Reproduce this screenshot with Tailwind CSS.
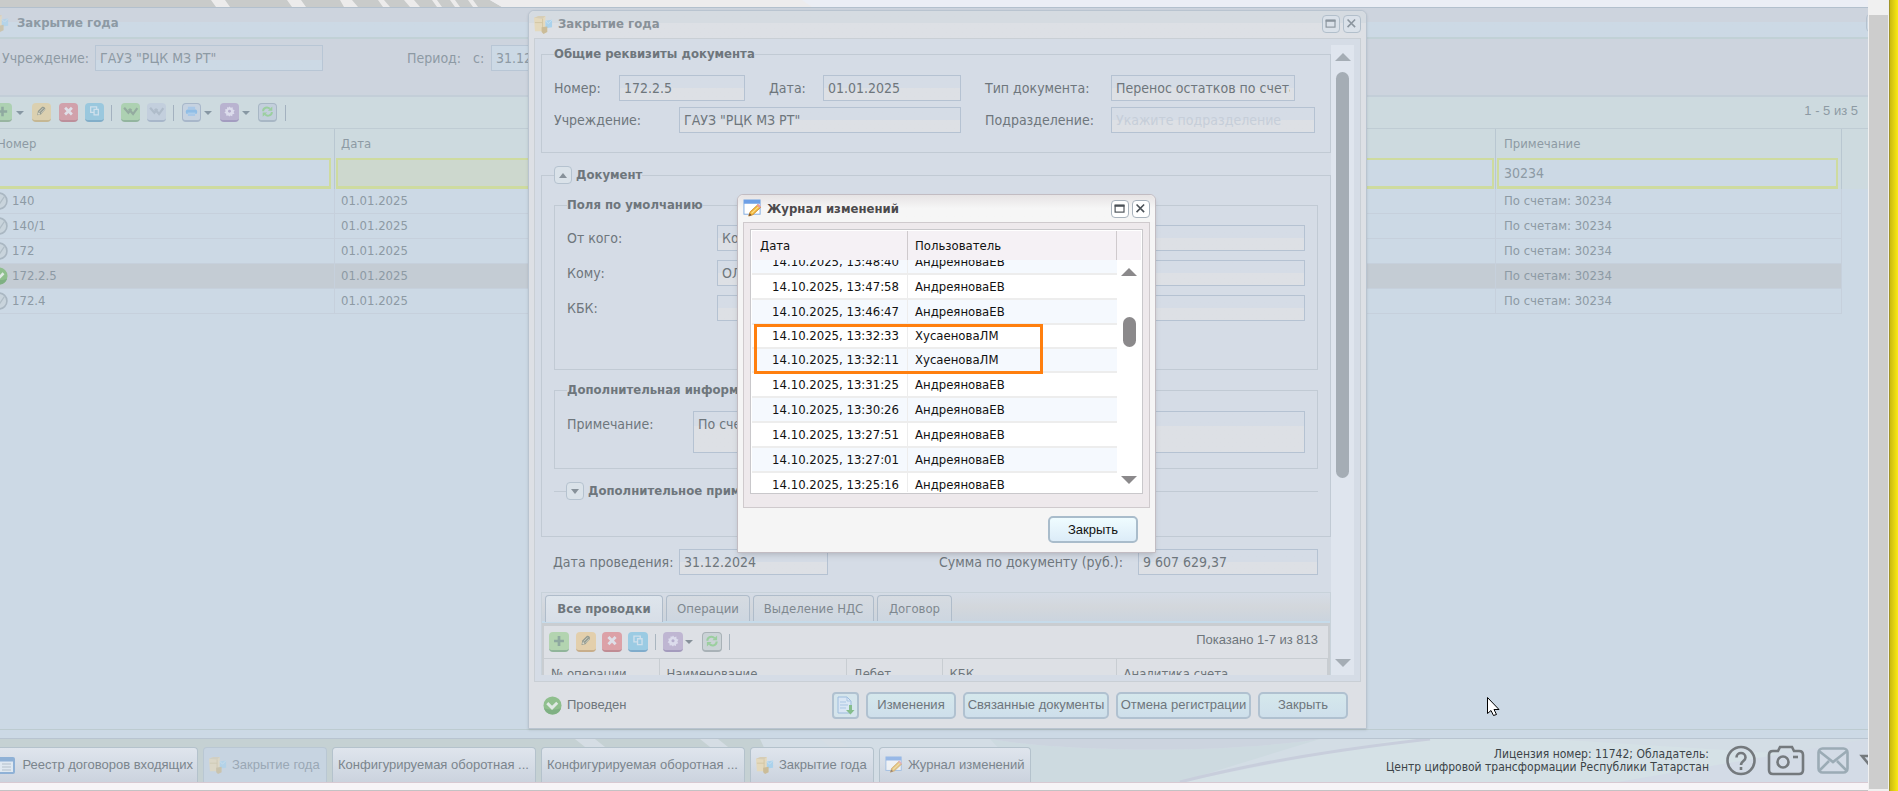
<!DOCTYPE html>
<html lang="ru">
<head>
<meta charset="utf-8">
<title>Закрытие года</title>
<script src="https://cdn.jsdelivr.net/npm/@tailwindcss/browser@4"></script>
</head>
<body class="h-screen overflow-hidden bg-[#f5f3f5] font-['DejaVu_Sans_Condensed','DejaVu_Sans',sans-serif] text-[14px]">
<svg class="hidden" aria-hidden="true">
  <symbol id="plus" viewBox="0 0 20 20"><path d="M8.500 4.500h3v4h4v3h-4v4h-3v-4h-4v-3h4z" fill="#8fa9a0"/></symbol>
  <symbol id="pencil" viewBox="0 0 20 20"><path d="M5 14.500l.8-5 5-5c2-1 4.500 1.500 3.500 3.500l-5 5.500z" fill="#949b91"/><path d="M7.500 10.500l4.500-4.500M9.500 12l4.500-4.500" stroke="#d9d6c6" stroke-width="1"/><circle cx="7" cy="12.500" r="1.200" fill="#dcd8c8"/></symbol>
  <symbol id="cross" viewBox="0 0 20 20"><path d="M6 5.500l8 8M14 5.500l-8 8" stroke="#dfdfe8" stroke-width="3.200"/></symbol>
  <symbol id="copy" viewBox="0 0 20 20"><path d="M9 11H5.500V4.500h7V7M9.500 7.500h5v6.500h-5z" fill="none" stroke="#cfe0ec" stroke-width="1.500"/></symbol>
  <symbol id="check2" viewBox="0 0 20 20"><path d="M2.500 5.500l5 6 3.500-4.500M8 7l5 6 5-7" fill="none" stroke="currentColor" stroke-width="2.600"/></symbol>
  <symbol id="print" viewBox="0 0 20 20"><path d="M5.500 3.500h9v3h-9zM5.500 12h9v3h-9z" fill="#a9c8e8"/><rect x="3" y="7" width="14" height="5.500" rx="2" fill="#8fbde6"/><path d="M5 11.500h10" stroke="#c6daee"/></symbol>
  <symbol id="gear" viewBox="0 0 20 20"><path d="M10 4l1.500 1.700 2.200-.6.200 2.400 2.200 1-1.300 2 1 2-2.300.8-.3 2.300-2.200-.8-1 1.200-1.500-1.400-2.300.4-.1-2.300L4 11.500l1.500-1.900L4.700 7.500 7 7l.4-2.200L9 5.200z" fill="#dcdcec"/><circle cx="10" cy="9.700" r="1.700" fill="#b5aecd"/></symbol>
  <symbol id="refresh" viewBox="0 0 20 20"><path d="M4.500 9c0-4.500 5.500-6 8.500-3M15.500 10c0 4.500-5.500 6-8.500 3" fill="none" stroke="#9bcf9f" stroke-width="2.400"/><path d="M16 3v5.500h-5.500zM4 16v-5.500h5.500z" fill="#9bcf9f"/></symbol>
  <symbol id="box" viewBox="0 0 20 20"><path d="M0 3l5-2h7v14l-4 2H1z" fill="#e4d9bd"/><path d="M0 3l5-2h7l-3 3z" fill="#d6cdb6"/><path d="M9 4v12M1 8h8" stroke="#d2c5a3" fill="none"/><path d="M12 6l7-1v8l-7 1z" fill="#abd2ec"/><path d="M12 6l3 3 4-4" fill="none" stroke="#c9e1f1"/><path d="M8 13l6-1v6l-4 2-2-2z" fill="#cbbc98"/></symbol>
  <symbol id="journal" viewBox="0 0 20 20"><rect x="1" y="1" width="17" height="15" fill="#fff" stroke="#7eaae0"/><path d="M1 1h17v4H1z" fill="#6d9fe6"/><path d="M6 18l1.500-4.500 8-7.500 3 3-8 7.500z" fill="#f2b63c" stroke="#c98a2c" stroke-width=".8"/><path d="M9 15l7.500-7" stroke="#fbe08a" stroke-width="1.200"/><path d="M14.500 6.500l3 3 1.500-1.500-3-3z" fill="#e89aa0"/><path d="M6 18l1-3 2 2z" fill="#6b4a34"/></symbol>
  <symbol id="max" viewBox="0 0 18 18"><rect x="3.500" y="4.500" width="10" height="8" fill="none" stroke="currentColor" stroke-width="1.300"/><path d="M3 5.500h11" stroke="currentColor" stroke-width="2"/></symbol>
  <symbol id="close" viewBox="0 0 18 18"><path d="M4 4l8.500 8.500M12.500 4L4 12.500" stroke="currentColor" stroke-width="1.800"/></symbol>
  <symbol id="off" viewBox="0 0 20 20"><circle cx="10" cy="10" r="8.800" fill="#c9d4dc" stroke="#aab7c2" stroke-width="1.800"/><path d="M6 10l4 4 6-9" fill="none" stroke="#b0bdc6" stroke-width="1.500"/></symbol>
  <symbol id="on" viewBox="0 0 20 20"><circle cx="10" cy="10" r="9.500" fill="#8fbf8d"/><path d="M1 13a9.500 9.500 0 0 0 18 0c-5 2-13 2-18 0z" fill="#7fb083"/><path d="M4.500 7.500l5 5L15 7" fill="none" stroke="#dfe9e4" stroke-width="3"/></symbol>
</svg>

<div class="flex h-full">
<div class="flex h-full min-w-0 flex-1 flex-col">
<main class="relative min-h-0 flex-1 overflow-hidden bg-[#ccd9e5] text-[#8d9aa4]">
  <svg class="block h-[7px] w-full bg-[#ebeef5]" viewBox="0 0 1868 7" preserveAspectRatio="none"><path d="M0 0h490l12 7H0z" fill="#c9cbca"/><path d="M211 0h14l5 7h-14zM287 0h14l5 7h-14zM340 0h12l6 7h-14zM378 0h6l6 7h-7zM404 0h10l6 7h-10zM432 0h5l5 7h-5zM450 0h5l5 7h-5zM468 0h5l5 7h-5z" fill="#ecebeb"/><path d="M490 0h312l10 7H502z" fill="#edeced"/></svg>
  <section class="-ml-3 flex h-full flex-col border-t border-[#b3c0cd]">
    <header class="flex h-[31px] shrink-0 items-center gap-2 border-b-2 border-[#c1d1d6] bg-linear-to-b from-[#cdd4de] from-50% to-[#ccd9e5] to-50% pl-[3px]">
      <svg class="size-[18px] opacity-70"><use href="#box"/></svg>
      <h1 class="flex-1 text-[13px] font-bold">Закрытие года</h1>
      <button class="-mr-4 size-[18px] rounded border border-[#b5c2cf]" aria-label="Развернуть"></button>
    </header>
    <div class="flex h-[58px] shrink-0 items-start border-b-2 border-[#c3ced8] bg-[#cdd4de] pt-[6px] pl-[14px]">
      <label for="org" class="w-[93px] leading-[26px]">Учреждение:</label>
      <input id="org" class="h-[26px] w-[228px] border border-[#b8c6d5] bg-linear-to-b from-[#cdd4de] from-60% to-[#ccd9e5] to-60% px-1" value='ГАУЗ "РЦК МЗ РТ"'>
      <span class="ml-[84px] w-[66px] leading-[26px]">Период:</span>
      <label for="from" class="w-[18px] leading-[26px]">с:</label>
      <input id="from" class="h-[26px] w-[110px] border border-[#b8c6d5] bg-[#ccd9e5] px-1" value="31.12.2024">
    </div>
    <div class="flex h-8 shrink-0 items-center border-b border-[#bfccd4] bg-[#cddadf] pl-[5px] font-['Liberation_Sans',sans-serif] text-[13px]">
      <button aria-label="Добавить" class="size-[19px] rounded-[4px] border-b-2 border-[#98b5a1] bg-[#add1b2]"><svg class="size-full"><use href="#plus"/></svg></button>
      <span class="ml-[4px] border-x-4 border-t-4 border-x-transparent border-t-[#8797a3]"></span>
      <button aria-label="Изменить" class="ml-2 size-[19px] rounded-[4px] border-b-2 border-[#c5b793] bg-[#dbd0b0]"><svg class="size-full"><use href="#pencil"/></svg></button>
      <button aria-label="Удалить" class="ml-2 size-[19px] rounded-[4px] border-b-2 border-[#bc8f9b] bg-[#d1a1ab]"><svg class="size-full"><use href="#cross"/></svg></button>
      <button aria-label="Копировать" class="ml-[7px] size-[19px] rounded-[4px] border-b-2 border-[#82aec9] bg-[#9ac8de]"><svg class="size-full"><use href="#copy"/></svg></button>
      <span class="mx-[7px] h-4 w-px bg-[#a3b1bf]"></span>
      <button aria-label="Провести" class="ml-[2px] size-[19px] rounded-[4px] border-b-2 border-[#93b59f] bg-[#add1b2] text-[#94aba0]"><svg class="size-full"><use href="#check2"/></svg></button>
      <button aria-label="Отменить проведение" class="ml-[7px] size-[19px] rounded-[4px] border-b-2 border-[#a8b7ca] bg-[#c3cfdd] text-[#afbcca]"><svg class="size-full"><use href="#check2"/></svg></button>
      <span class="mx-[7px] h-4 w-px bg-[#a3b1bf]"></span>
      <button aria-label="Печать" class="ml-px size-[19px] rounded-[4px] border border-b-2 border-[#a8b7ca] bg-[#c6d2e0]"><svg class="size-full"><use href="#print"/></svg></button>
      <span class="ml-[3px] border-x-4 border-t-4 border-x-transparent border-t-[#8797a3]"></span>
      <button aria-label="Сервис" class="ml-2 size-[19px] rounded-[4px] border-b-2 border-[#a39cc0] bg-[#b9b3d0]"><svg class="size-full"><use href="#gear"/></svg></button>
      <span class="ml-[3px] border-x-4 border-t-4 border-x-transparent border-t-[#8797a3]"></span>
      <button aria-label="Обновить" class="ml-2 size-[19px] rounded-[4px] border border-b-2 border-[#a8b7c5] bg-[#c3cfdc]"><svg class="size-full"><use href="#refresh"/></svg></button>
      <span class="mx-[8px] h-4 w-px bg-[#a3b1bf]"></span>
      <span class="ml-auto pr-[10px] pb-[3px]">1 - 5 из 5</span>
    </div>
    <table class="w-full table-fixed border-separate border-spacing-0 text-left text-[13px]">
      <colgroup><col class="w-[347px]"><col class="w-[290px]"><col><col class="w-[346px]"><col class="w-[26px]"></colgroup>
      <thead class="bg-[#cddadf]">
        <tr class="h-[29px]"><th class="border-r border-[#b9c7d1] pl-[9px] font-normal">Номер</th><th class="border-r border-[#b9c7d1] pl-[6px] font-normal">Дата</th><th class="border-r border-[#b9c7d1]"></th><th class="border-r border-[#b9c7d1] pl-[8px] font-normal">Примечание</th><th></th></tr>
        <tr class="h-[31px]">
          <td class="border-r border-[#b9c7d1] pr-[3px]"><input aria-label="Фильтр по номеру" class="block h-[31px] w-full border-2 border-b-3 border-[#cedb9f] bg-[#ccd9e5] px-2"></td>
          <td class="border-r border-[#b9c7d1] px-px"><input aria-label="Фильтр по дате" class="block h-[31px] w-full border-2 border-b-3 border-[#cedb9f] bg-[#cdd8ce] px-2"></td>
          <td class="border-r border-[#b9c7d1] px-px"><input aria-label="Фильтр по типу" class="block h-[31px] w-full border-2 border-b-3 border-[#cedb9f] bg-[#ccd9e5] px-2"></td>
          <td class="border-r border-[#b9c7d1] pr-[3px] pl-px"><input aria-label="Фильтр по примечанию" class="block h-[31px] w-full border-2 border-b-3 border-[#cedb9f] bg-[#ccd9e5] px-[5px] text-[14px]" value="30234"></td><td></td>
        </tr>
      </thead>
      <tbody class="[&_td]:h-[25px] [&_td]:border-r [&_td]:border-b [&_td]:border-[#c6d0dc] [&_td]:p-0 [&_td]:pl-[6px] [&_td:nth-child(4)]:pl-[8px] [&_td:last-child]:border-0">
        <tr><td><div class="flex items-center gap-1"><svg class="-ml-1 size-[18px]"><use href="#off"/></svg>140</div></td><td>01.01.2025</td><td></td><td>По счетам: 30234</td><td></td></tr>
        <tr><td><div class="flex items-center gap-1"><svg class="-ml-1 size-[18px]"><use href="#off"/></svg>140/1</div></td><td>01.01.2025</td><td></td><td>По счетам: 30234</td><td></td></tr>
        <tr><td><div class="flex items-center gap-1"><svg class="-ml-1 size-[18px]"><use href="#off"/></svg>172</div></td><td>01.01.2025</td><td></td><td>По счетам: 30234</td><td></td></tr>
        <tr class="[&_td:not(:last-child)]:bg-[#c4ccd4]"><td><div class="flex items-center gap-1"><svg class="-ml-1 size-[18px]"><use href="#on"/></svg>172.2.5</div></td><td>01.01.2025</td><td></td><td>По счетам: 30234</td><td></td></tr>
        <tr><td><div class="flex items-center gap-1"><svg class="-ml-1 size-[18px]"><use href="#off"/></svg>172.4</div></td><td>01.01.2025</td><td></td><td>По счетам: 30234</td><td></td></tr>
      </tbody>
    </table>
  </section>
  <div class="absolute inset-x-0 bottom-0 h-[10px] border-y border-t-[#bccbd0] border-b-[#b8c4d0]"></div>

  <!-- Document window -->
  <section class="absolute top-[10px] bottom-[10px] left-[528px] flex w-[839px] flex-col rounded-t-[6px] border border-[#b9c4d0] bg-[#dde0e5] px-[5px] text-[#6e767c] shadow-sm">
    <header class="-mx-[5px] flex h-[27px] shrink-0 items-center gap-[5px] rounded-t-[6px] bg-linear-to-b from-[#d5dbe1] from-45% to-[#dde0e5] to-45% px-[5px] pb-px">
      <svg class="size-[19px]"><use href="#box"/></svg>
      <h2 class="flex-1 text-[13px] font-bold text-[#899198]">Закрытие года</h2>
      <button aria-label="Развернуть" class="size-[18px] rounded-[4px] border border-[#b2bfcb] bg-[#dae1e9] text-[#8b959e]"><svg class="size-full"><use href="#max"/></svg></button>
      <button aria-label="Закрыть окно" class="-ml-[2px] size-[18px] rounded-[4px] border border-[#b2bfcb] bg-[#dae1e9] text-[#8b959e]"><svg class="size-full"><use href="#close"/></svg></button>
    </header>
    <div class="flex min-h-0 flex-1 border border-[#c9cfd5] bg-[#d5dce6] p-[6px]">
      <div class="min-w-0 flex-1 overflow-hidden">
        <fieldset class="min-w-0 border border-[#c1cad4] px-3 pt-3 pb-[19px]">
          <legend class="text-[13px] leading-[18px] font-bold">Общие реквизиты документа</legend>
          <div class="flex items-center">
            <label for="num" class="w-[65px]">Номер:</label>
            <input id="num" class="h-[26px] w-[126px] border border-[#b5c2d2] bg-linear-to-b from-[#d5dce6] from-50% to-[#dde0e5] to-50% px-1" value="172.2.5">
            <label for="date" class="ml-6 w-[54px]">Дата:</label>
            <input id="date" class="h-[26px] w-[138px] border border-[#b5c2d2] bg-linear-to-b from-[#d5dce6] from-50% to-[#dde0e5] to-50% px-1" value="01.01.2025">
            <label for="type" class="ml-6 w-[126px]">Тип документа:</label>
            <input id="type" class="h-[26px] w-[184px] border border-[#b5c2d2] bg-linear-to-b from-[#d5dce6] from-50% to-[#dde0e5] to-50% px-1" value="Перенос остатков по счетам">
          </div>
          <div class="mt-[6px] flex items-center">
            <label for="org2" class="w-[125px]">Учреждение:</label>
            <input id="org2" class="h-[26px] w-[282px] border border-[#b5c2d2] bg-linear-to-b from-[#d5dce6] from-50% to-[#dde0e5] to-50% px-1" value='ГАУЗ "РЦК МЗ РТ"'>
            <label for="dep" class="ml-6 w-[126px]">Подразделение:</label>
            <input id="dep" class="h-[26px] w-[204px] border border-[#b5c2d2] bg-linear-to-b from-[#d5dce6] from-50% to-[#dde0e5] to-50% px-1 placeholder:text-[#c6ced9]" placeholder="Укажите подразделение">
          </div>
        </fieldset>
        <fieldset class="mt-[13px] min-w-0 border border-[#c1cad4] px-3 pt-3 pb-[36px]">
          <legend class="flex items-center gap-1 text-[13px] leading-[18px] font-bold"><button aria-label="Свернуть" class="flex size-[18px] items-center justify-center rounded-[4px] border border-[#b5c2cf] bg-[#dae2e9]"><span class="border-x-4 border-b-5 border-x-transparent border-b-[#87919a]"></span></button>Документ</legend>
          <fieldset class="min-w-0 border border-[#c1cad4] px-3 pt-[11px] pb-[48px]">
            <legend class="text-[13px] leading-[18px] font-bold">Поля по умолчанию</legend>
            <div class="flex flex-col gap-[9px]">
              <div class="flex items-center"><label for="who" class="w-[150px]">От кого:</label><input id="who" class="h-[26px] min-w-0 flex-1 border border-[#b5c2d2] bg-linear-to-b from-[#d5dce6] from-50% to-[#dde0e5] to-50% px-1" value="Ко"></div>
              <div class="flex items-center"><label for="whom" class="w-[150px]">Кому:</label><input id="whom" class="h-[26px] min-w-0 flex-1 border border-[#b5c2d2] bg-linear-to-b from-[#d5dce6] from-50% to-[#dde0e5] to-50% px-1" value="ОЛ"></div>
              <div class="flex items-center"><label for="kbk" class="w-[150px]">КБК:</label><input id="kbk" class="h-[26px] min-w-0 flex-1 border border-[#b5c2d2] bg-linear-to-b from-[#d5dce6] from-50% to-[#dde0e5] to-50% px-1"></div>
            </div>
          </fieldset>
          <fieldset class="mt-[11px] min-w-0 border border-[#c1cad4] px-3 pt-3 pb-[15px]">
            <legend class="text-[13px] leading-[18px] font-bold">Дополнительная информация</legend>
            <div class="flex"><label for="note" class="w-[126px] leading-[26px]">Примечание:</label><textarea id="note" class="block h-[42px] min-w-0 flex-1 resize-none border border-[#b5c2d2] bg-linear-to-b from-[#d5dce6] from-35% to-[#dde0e5] to-35% px-1 py-[2px]">По счетам: 30234</textarea></div>
          </fieldset>
          <fieldset class="mt-[13px] min-w-0 border-t border-[#c1cad4] px-3">
            <legend class="flex items-center gap-1 text-[13px] leading-[18px] font-bold"><button aria-label="Развернуть раздел" class="flex size-[18px] items-center justify-center rounded-[4px] border border-[#b5c2cf] bg-[#dae2e9]"><span class="border-x-4 border-t-5 border-x-transparent border-t-[#87919a]"></span></button>Дополнительное примечание</legend>
          </fieldset>
        </fieldset>
        <div class="mt-3 flex items-center pl-3">
          <label for="posted" class="w-[126px] whitespace-nowrap">Дата проведения:</label>
          <input id="posted" class="h-[26px] w-[149px] border border-[#b5c2d2] bg-linear-to-b from-[#d5dce6] from-50% to-[#dde0e5] to-50% px-1" value="31.12.2024">
          <label for="sum" class="ml-[111px] w-[199px] whitespace-nowrap">Сумма по документу (руб.):</label>
          <input id="sum" class="h-[26px] w-[180px] border border-[#b5c2d2] bg-linear-to-b from-[#d5dce6] from-50% to-[#dde0e5] to-50% px-1" value="9 607 629,37">
        </div>
        <div class="mt-[17px] border border-[#c8d2da]">
          <nav class="flex h-[30px] gap-[3px] border-b-2 border-[#c6dbea] bg-linear-to-b from-[#d5dce6] via-[#d3d7dc] via-50% to-[#cbd4de] px-[3px] pt-[2px] text-[13px] text-[#7f888f]">
            <button class="h-[27px] w-[118px] rounded-t border border-b-0 border-[#afbcca] bg-linear-to-b from-[#dee5ec] to-[#d7dee7] font-bold text-[#6e767c]">Все проводки</button>
            <button class="h-[26px] w-[84px] rounded-t border border-b-0 border-[#afbcca] bg-linear-to-b from-[#d6dbe1] to-[#cdd6e0]">Операции</button>
            <button class="h-[26px] w-[121px] rounded-t border border-b-0 border-[#afbcca] bg-linear-to-b from-[#d6dbe1] to-[#cdd6e0]">Выделение НДС</button>
            <button class="h-[26px] w-[75px] rounded-t border border-b-0 border-[#afbcca] bg-linear-to-b from-[#d6dbe1] to-[#cdd6e0]">Договор</button>
          </nav>
          <div class="border-2 border-t-3 border-[#c9cdd1] bg-[#dde0e5]">
            <div class="flex h-[33px] items-center border-b border-[#c8cdd2] pr-[10px] pl-[5px] font-['Liberation_Sans',sans-serif] text-[13px]">
              <button aria-label="Добавить проводку" class="size-5 rounded-[4px] border-b-2 border-[#91b59a] bg-[#b3d4b0]"><svg class="size-full"><use href="#plus"/></svg></button>
              <button aria-label="Изменить проводку" class="ml-[7px] size-5 rounded-[4px] border-b-2 border-[#c8ae8b] bg-[#e3cfac]"><svg class="size-full"><use href="#pencil"/></svg></button>
              <button aria-label="Удалить проводку" class="ml-[6px] size-5 rounded-[4px] border-b-2 border-[#c08c94] bg-[#dca1a7]"><svg class="size-full"><use href="#cross"/></svg></button>
              <button aria-label="Копировать проводку" class="ml-[6px] size-5 rounded-[4px] border-b-2 border-[#80accb] bg-[#9bcbe3]"><svg class="size-full"><use href="#copy"/></svg></button>
              <span class="mx-[7px] h-4 w-px bg-[#a9b5bf]"></span>
              <button aria-label="Сервис проводок" class="size-5 rounded-[4px] border-b-2 border-[#a49bbd] bg-[#bfb6d2]"><svg class="size-full"><use href="#gear"/></svg></button>
              <span class="ml-[2px] border-x-4 border-t-4 border-x-transparent border-t-[#87919a]"></span>
              <button aria-label="Обновить проводки" class="ml-[9px] size-5 rounded-[4px] border border-b-2 border-[#a9b2b7] bg-[#cbd3d7]"><svg class="size-full"><use href="#refresh"/></svg></button>
              <span class="mx-[7px] h-4 w-px bg-[#a9b5bf]"></span>
              <span class="ml-auto pb-1">Показано 1-7 из 813</span>
            </div>
            <table class="w-full table-fixed text-left text-[13px]">
              <colgroup><col class="w-[115px]"><col class="w-[187px]"><col class="w-[96px]"><col class="w-[174px]"><col></colgroup>
              <thead><tr class="h-[29px] [&_th]:border-r [&_th]:border-[#c8cdd2] [&_th]:pl-[7px] [&_th]:font-normal"><th>№ операции</th><th>Наименование</th><th>Дебет</th><th>КБК</th><th>Аналитика счета</th></tr></thead>
            </table>
          </div>
        </div>
      </div>
      <div class="flex w-[23px] shrink-0 flex-col items-center bg-[#dfe5ee] py-2">
        <span class="border-x-8 border-b-8 border-x-transparent border-b-[#a5adb5]"></span>
        <span class="mt-[11px] h-[406px] w-[13px] rounded-full bg-[#a5adb5]"></span>
        <span class="mt-auto border-x-8 border-t-8 border-x-transparent border-t-[#a5adb5]"></span>
      </div>
    </div>
    <footer class="flex h-[46px] shrink-0 items-center gap-[7px] pr-[13px] pl-[9px] font-['Liberation_Sans',sans-serif] text-[13px]">
      <svg class="size-[19px]"><use href="#on"/></svg>
      <span class="-ml-[2px] flex-1">Проведен</span>
      <button aria-label="Выгрузить" class="flex size-[27px] items-center justify-center rounded-[4px] border-2 border-[#b0c1d0] bg-[#d5e5ec]"><svg class="size-[19px]" viewBox="0 0 19 19"><path d="M2 1h9l4 4v12H2z" fill="#d9e6f4" stroke="#9dbcdc"/><path d="M11 1v4h4M4 6h6M4 9h8M4 12h6" stroke="#a9c5e3" fill="none"/><path d="M13 9h3v5h2.500L14.500 18.500 10 14h3z" fill="#85bd8c"/></svg></button>
      <button class="h-[27px] w-[90px] rounded-[5px] border-2 border-[#b0c1d0] bg-linear-to-b from-[#d5e8ec] to-[#cedfeb] whitespace-nowrap">Изменения</button>
      <button class="h-[27px] w-[146px] rounded-[5px] border-2 border-[#b0c1d0] bg-linear-to-b from-[#d5e8ec] to-[#cedfeb] whitespace-nowrap">Связанные документы</button>
      <button class="h-[27px] w-[135px] rounded-[5px] border-2 border-[#b0c1d0] bg-linear-to-b from-[#d5e8ec] to-[#cedfeb] whitespace-nowrap">Отмена регистрации</button>
      <button class="h-[27px] w-[90px] rounded-[5px] border-2 border-[#b0c1d0] bg-linear-to-b from-[#d5e8ec] to-[#cedfeb] whitespace-nowrap">Закрыть</button>
    </footer>
  </section>

  <!-- Change log window -->
  <section class="absolute top-[194px] left-[737px] flex w-[419px] flex-col rounded-t-[6px] border border-[#c2bcc2] bg-[#f5f5f5] px-[5px] text-[#111] shadow-md">
    <header class="-mx-[5px] flex h-[27px] items-center gap-[5px] rounded-t-[6px] bg-linear-to-b from-[#e6e3e4] to-[#f6f6f6] to-50% px-[5px]">
      <svg class="size-[19px]"><use href="#journal"/></svg>
      <h2 class="flex-1 text-[13px] font-bold text-[#4c4a4c]">Журнал изменений</h2>
      <button aria-label="Развернуть журнал" class="size-[18px] rounded-[4px] border border-[#a9b3bd] bg-white text-[#4b5157]"><svg class="size-full"><use href="#max"/></svg></button>
      <button aria-label="Закрыть журнал" class="-ml-[2px] size-[18px] rounded-[4px] border border-[#a9b3bd] bg-white text-[#4b5157]"><svg class="size-full"><use href="#close"/></svg></button>
    </header>
    <div class="border border-[#cfcacd] bg-[#eee9ec] px-[6px] pt-[6px] pb-[13px]">
      <div class="flex h-[265px] flex-col border border-[#c9c8cb] bg-white p-px text-[13px]">
        <div class="z-10 flex h-[29px] shrink-0 items-center bg-[#f5f1f5]">
          <span class="flex h-full w-[156px] items-center border-r border-[#cfcacd] pl-2">Дата</span>
          <span class="flex h-full flex-1 items-center border-r border-[#cfcacd] pl-[7px]">Пользователь</span>
          <span class="w-[24px]"></span>
        </div>
        <div class="flex min-h-0 flex-1">
          <div class="relative flex min-w-0 flex-1 flex-col justify-end overflow-hidden">
            <table class="-mb-[6px] w-full table-fixed border-separate border-spacing-0 [&_td]:border-b-2 [&_td]:border-[#ededed] [&_td]:p-0 [&_td]:pl-[7px] [&_td:first-child]:border-r [&_td:first-child]:pr-2 [&_td:first-child]:text-right [&_tr]:h-[25px] [&_tr:nth-child(4)]:h-[24px] [&_tr:nth-child(5)]:h-[24px] [&_tr:nth-child(odd)]:bg-[#f5f9fe]" aria-label="Журнал изменений">
              <colgroup><col class="w-[156px]"><col></colgroup>
              <tbody>
                <tr><td>14.10.2025, 13:48:40</td><td>АндреяноваЕВ</td></tr>
                <tr><td>14.10.2025, 13:47:58</td><td>АндреяноваЕВ</td></tr>
                <tr><td>14.10.2025, 13:46:47</td><td>АндреяноваЕВ</td></tr>
                <tr><td>14.10.2025, 13:32:33</td><td>ХусаеноваЛМ</td></tr>
                <tr><td>14.10.2025, 13:32:11</td><td>ХусаеноваЛМ</td></tr>
                <tr><td>14.10.2025, 13:31:25</td><td>АндреяноваЕВ</td></tr>
                <tr><td>14.10.2025, 13:30:26</td><td>АндреяноваЕВ</td></tr>
                <tr><td>14.10.2025, 13:27:51</td><td>АндреяноваЕВ</td></tr>
                <tr><td>14.10.2025, 13:27:01</td><td>АндреяноваЕВ</td></tr>
                <tr><td>14.10.2025, 13:25:16</td><td>АндреяноваЕВ</td></tr>
              </tbody>
            </table>
            <div class="absolute top-[64px] left-[2px] h-[50px] w-[289px] border-3 border-[#ff7f0e]"></div>
          </div>
          <div class="flex w-[24px] shrink-0 flex-col items-center py-2">
            <span class="border-x-8 border-b-8 border-x-transparent border-b-[#8b898b]"></span>
            <span class="mt-[41px] h-[30px] w-[13px] rounded-full bg-[#8b898b]"></span>
            <span class="mt-auto border-x-8 border-t-8 border-x-transparent border-t-[#8b898b]"></span>
          </div>
        </div>
      </div>
    </div>
    <footer class="flex h-[44px] items-start justify-end pt-2 pr-3 font-['Liberation_Sans',sans-serif] text-[13px]">
      <button class="h-[27px] w-[90px] rounded-[5px] border-2 border-[#a9bccb] bg-linear-to-b from-[#effcff] to-[#dcecf8]">Закрыть</button>
    </footer>
  </section>

  <svg class="absolute top-[697px] left-[1487px] h-[19px] w-[13px]" viewBox="0 0 13 19"><path d="M.5.500v16l3.500-3 2.500 5 3-1-2.500-5h5z" fill="#fff" stroke="#000"/></svg>
</main>

<footer class="relative flex h-[43px] shrink-0 items-end overflow-hidden bg-[#d3dde5] font-['Liberation_Sans',sans-serif] text-[13px] text-[#7b858d]">
  <svg class="absolute inset-0 h-full w-full" viewBox="0 0 1868 43" preserveAspectRatio="none">
    <path d="M0 0h760l20 43H0z" fill="#c5d1d3"/><path d="M575 0h20l10 8h-20zM700 0h18l10 8h-18zM820 0h18l10 8h-18z" fill="#d5dde4"/><path d="M990 0c80 14 240 14 330 0l-140 43h-150z" fill="#cddae0"/><path d="M990 0c80 14 240 14 330 0z" fill="#ccd4df"/><path d="M1400 0l150 0L1868 20v23H1180z" fill="#d5e1e6"/><path d="M1180 43C1250 25 1340 10 1430 0" stroke="#c8cedc" stroke-width="3" fill="none"/><path d="M1868 0v43h-250z" fill="#d3dbe6"/>
  </svg>
  <nav class="relative flex h-[35px] gap-[5px]">
    <button class="-ml-[10px] flex w-[208px] items-center justify-end gap-[7px] rounded-t border border-b-0 border-[#b4c2cc] bg-linear-to-b from-[#dfe5ed] to-[#cbd3de] pr-1 whitespace-nowrap"><svg class="size-[17px]" viewBox="0 0 17 17"><rect x="1" y="1" width="15" height="15" rx="1" fill="#dfe8f1" stroke="#8fb1d6" stroke-width="2"/><path d="M1 3h15" stroke="#8fb1d6" stroke-width="3"/><path d="M4 7h9M4 10h9M4 13h9" stroke="#b3bfca"/></svg>Реестр договоров входящих</button>
    <button class="flex w-[124px] items-center gap-[5px] rounded-t border border-b-0 border-[#b9c7d3] bg-[#c7d4e1] pl-[5px] whitespace-nowrap text-[#9aa8b5]"><svg class="size-[18px] opacity-70"><use href="#box"/></svg>Закрытие года</button>
    <button class="w-[204px] rounded-t border border-b-0 border-[#b4c2cc] bg-linear-to-b from-[#dfe5ed] to-[#cbd3de] px-[5px] text-left whitespace-nowrap">Конфигурируемая оборотная ...</button>
    <button class="w-[204px] rounded-t border border-b-0 border-[#b4c2cc] bg-linear-to-b from-[#dfe5ed] to-[#cbd3de] px-[5px] text-left whitespace-nowrap">Конфигурируемая оборотная ...</button>
    <button class="flex w-[124px] items-center gap-[5px] rounded-t border border-b-0 border-[#b4c2cc] bg-linear-to-b from-[#dfe5ed] to-[#cbd3de] pl-[5px] whitespace-nowrap"><svg class="size-[18px]"><use href="#box"/></svg>Закрытие года</button>
    <button class="flex w-[152px] items-center gap-[5px] rounded-t border border-b-0 border-[#b4c2cc] bg-linear-to-b from-[#dfe5ed] to-[#cbd3de] pl-[5px] whitespace-nowrap"><svg class="size-[18px] opacity-60"><use href="#journal"/></svg>Журнал изменений</button>
  </nav>
  <div class="relative ml-auto flex h-full items-center">
    <p class="mr-[17px] text-right font-['DejaVu_Sans_Condensed','DejaVu_Sans',sans-serif] text-[12px] leading-[13px] text-[#3c4448]">Лицензия номер: 11742; Обладатель:<br>Центр цифровой трансформации Республики Татарстан</p>
    <svg class="h-[31px] w-[142px]" viewBox="0 0 142 31" fill="none" stroke="#74797d" stroke-width="2.600"><circle cx="15" cy="15.500" r="13.500"/><path d="M10.500 12.500c0-6 9-6 9 0 0 3.500-4.500 3.500-4.500 7.500M15 22v3"/><path d="M47 6h5l2-4h12l2 4h5q4 0 4 4v15q0 4-4 4H47q-4 0-4-4V10q0-4 4-4z"/><circle cx="57" cy="17" r="5.500"/><path d="M67 12h5"/><g stroke="#9babb5"><rect x="92.500" y="3.500" width="29" height="24" rx="4"/><path d="M93 6l14 11L121 6M93 26l10-10M121 26l-10-10"/></g><path d="M136 11h20l-10 12z"/></svg>
  </div>
</footer>
<div class="h-[9px] shrink-0 border-y border-t-[#d8c9d2] border-b-[#c4c2c4] bg-[#f7f4f7]"></div>
</div>

<div class="flex w-[21px] shrink-0 flex-col border-x border-[#f0f0f0] bg-[#cdcdcd]"><span class="h-[15px] bg-[#f0f0f0]"></span><span class="mt-auto h-[2px] bg-[#f0f0f0]"></span></div>
<div class="w-[9px] shrink-0 border-l border-[#a09428] bg-linear-to-r from-[#cbbb10] to-[#fbea12]"></div>
</div>
</body>
</html>
